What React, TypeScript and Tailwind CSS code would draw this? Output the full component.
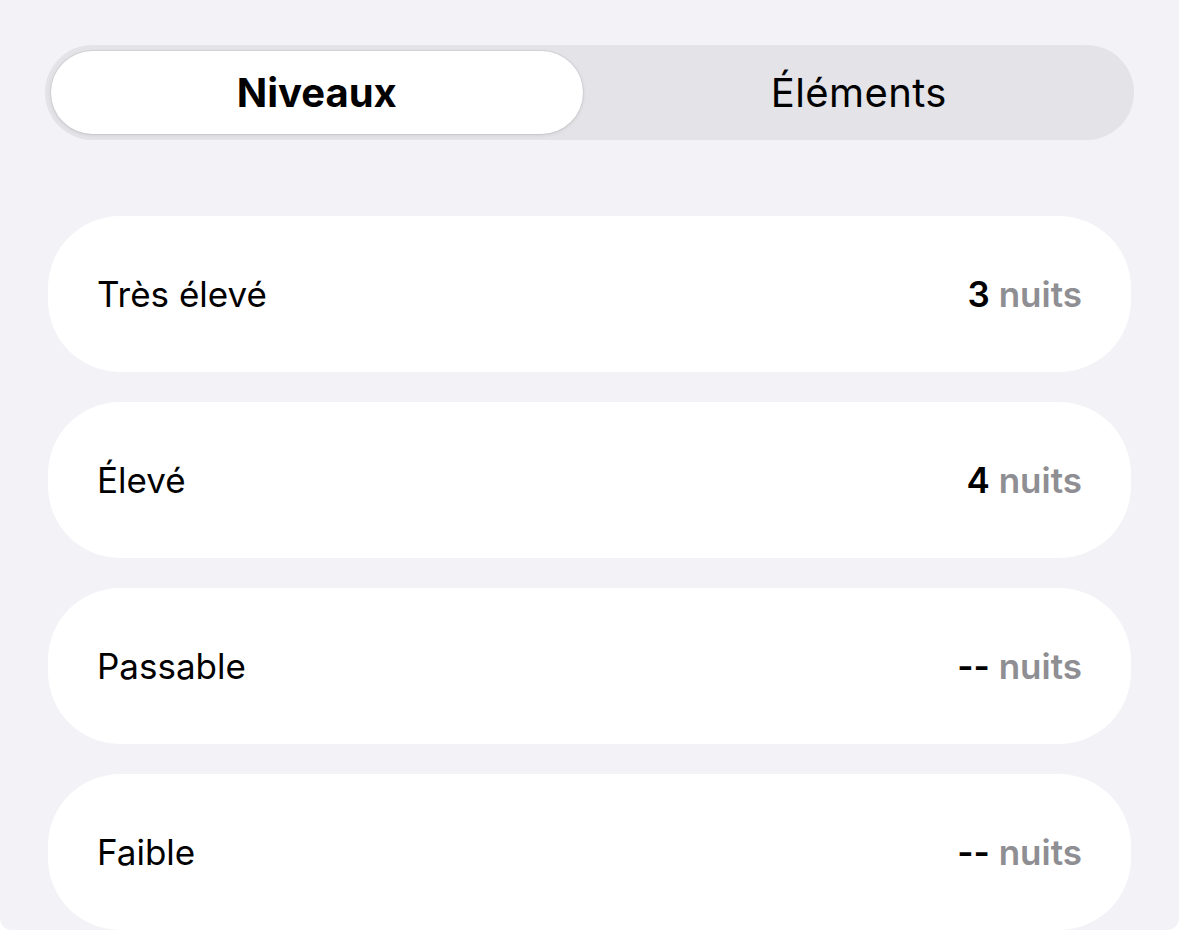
import { useState } from "react"

const levels = [
  { label: "Très élevé", nights: "3" },
  { label: "Élevé", nights: "4" },
  { label: "Passable", nights: "--" },
  { label: "Faible", nights: "--" },
]

const tabs = ["Niveaux", "Éléments"]

export default function App() {
  const [tab, setTab] = useState("Niveaux")

  return (
    <div className="bg-white" style={{ fontFamily: "Inter, 'Liberation Sans', sans-serif" }}>
      <div className="h-[930px] overflow-hidden rounded-b-[12px] bg-[#f2f2f7] px-[45px] pt-[45px]">
        <div className="flex h-[95px] rounded-full bg-[#e3e3e8] p-[6px]">
          {tabs.map((t) => (
            <div key={t} className="flex flex-1">
              <button
                onClick={() => setTab(t)}
                className={
                  t === tab
                    ? "mr-[7px] flex-1 rounded-full bg-white text-[40px] font-bold text-black shadow-[0_1px_4px_rgba(0,0,0,0.10)] ring-1 ring-black/5"
                    : "flex-1 rounded-full text-[40px] tracking-[0.01em] text-black"
                }
              >
                {t}
              </button>
            </div>
          ))}
        </div>

        <div className="mt-[76px] flex flex-col gap-[30px] px-[3px]">
          {levels.map((l) => (
            <div
              key={l.label}
              className="flex h-[156px] items-center justify-between rounded-[72px] bg-white px-[49px] text-[35px]"
            >
              <span className="text-black">{l.label}</span>
              <span className="font-semibold">
                <span className="text-black">{l.nights}</span>{" "}
                <span className="text-[#8e8e93]">nuits</span>
              </span>
            </div>
          ))}
        </div>
      </div>
    </div>
  )
}
